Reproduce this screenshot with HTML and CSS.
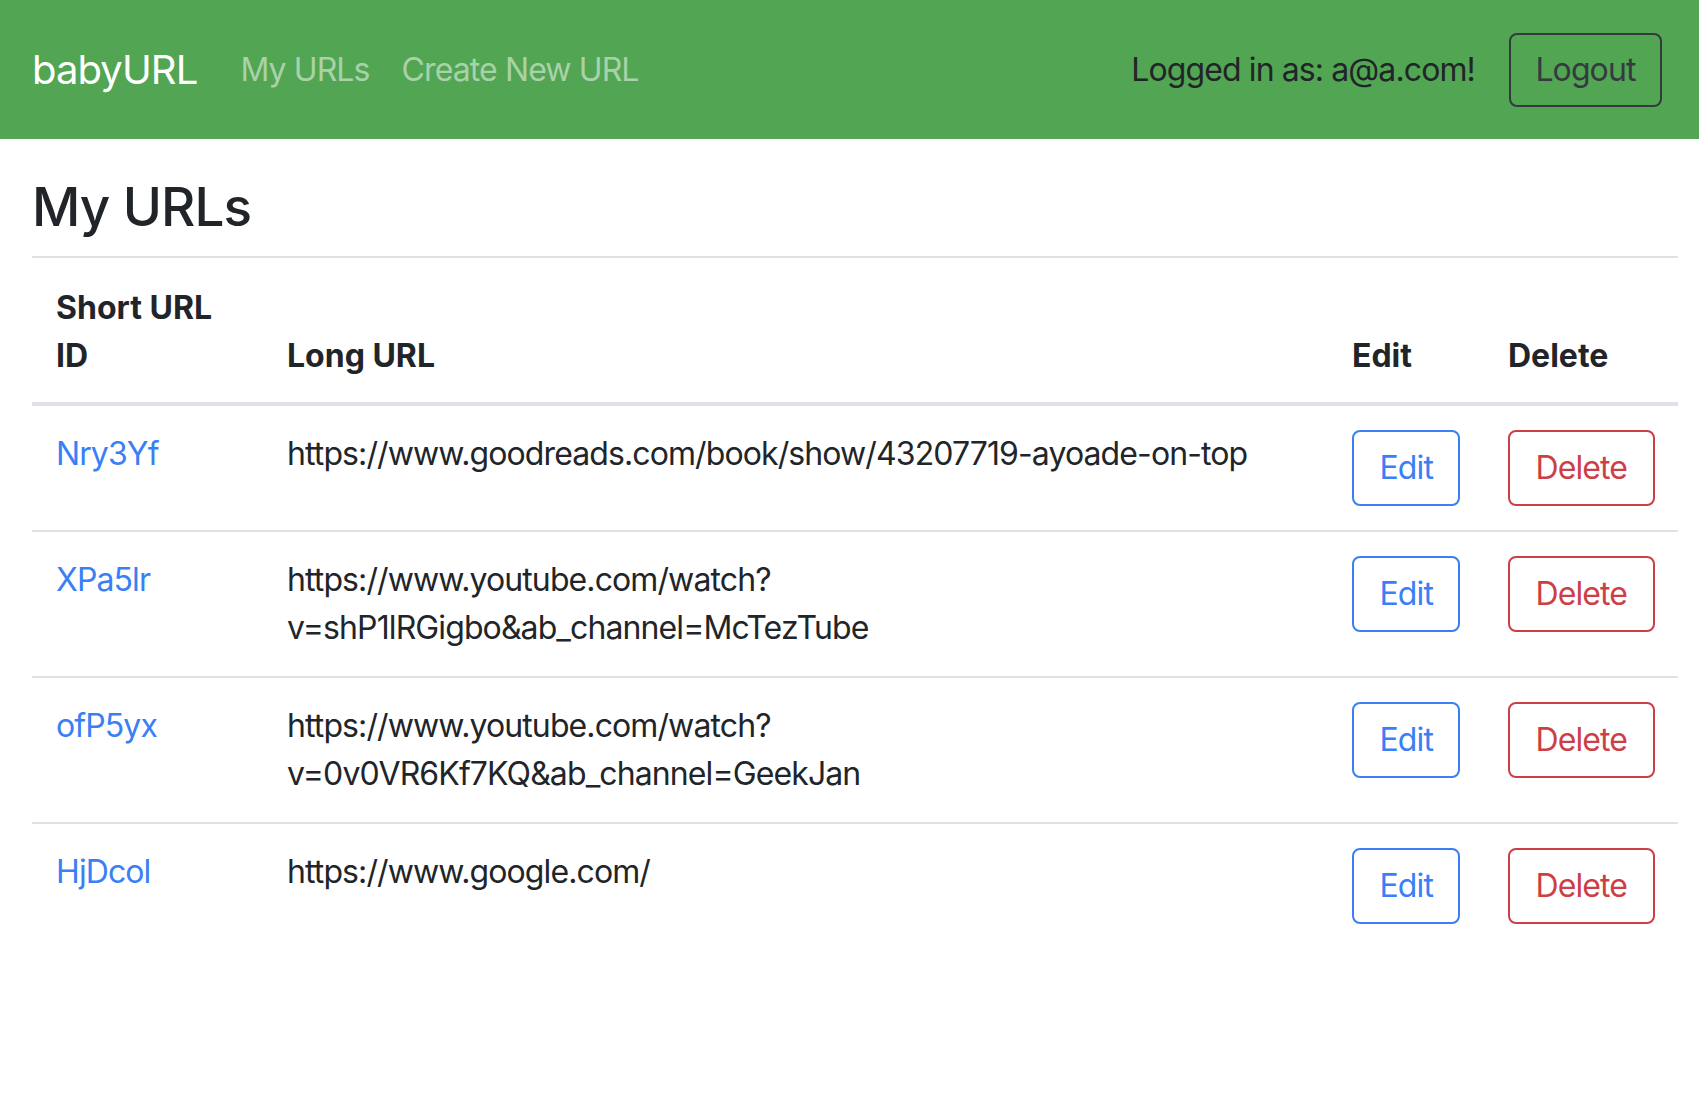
FILE: index.html
```html
<!DOCTYPE html>
<html lang="en">
<head>
<meta charset="utf-8">
<title>babyURL - My URLs</title>
<link rel="stylesheet" href="styles.css">
</head>
<body>
<nav class="navbar">
  <a class="brand" href="#">babyURL</a>
  <div class="nav-links">
    <a class="nav-link" href="#">My URLs</a>
    <a class="nav-link" href="#">Create New URL</a>
  </div>
  <div class="nav-right">
    <span class="nav-text">Logged in as: a@a.com!</span>
    <button class="btn btn-dark">Logout</button>
  </div>
</nav>
<main class="main">
  <h1 class="title">My URLs</h1>
  <table class="table">
    <colgroup>
      <col class="c1"><col class="c2"><col class="c3"><col class="c4">
    </colgroup>
    <thead>
      <tr>
        <th>Short URL ID</th>
        <th>Long URL</th>
        <th>Edit</th>
        <th>Delete</th>
      </tr>
    </thead>
    <tbody>
      <tr>
        <td><a class="link" href="#">Nry3Yf</a></td>
        <td>https://www.goodreads.com/book/show/43207719-ayoade-on-top</td>
        <td><button class="btn btn-primary">Edit</button></td>
        <td><button class="btn btn-danger">Delete</button></td>
      </tr>
      <tr>
        <td><a class="link" href="#">XPa5lr</a></td>
        <td>https://www.youtube.com/watch?<br>v=shP1lRGigbo&amp;ab_channel=McTezTube</td>
        <td><button class="btn btn-primary">Edit</button></td>
        <td><button class="btn btn-danger">Delete</button></td>
      </tr>
      <tr>
        <td><a class="link" href="#">ofP5yx</a></td>
        <td>https://www.youtube.com/watch?<br>v=0v0VR6Kf7KQ&amp;ab_channel=GeekJan</td>
        <td><button class="btn btn-primary">Edit</button></td>
        <td><button class="btn btn-danger">Delete</button></td>
      </tr>
      <tr>
        <td><a class="link" href="#">HjDcol</a></td>
        <td>https://www.google.com/</td>
        <td><button class="btn btn-primary">Edit</button></td>
        <td><button class="btn btn-danger">Delete</button></td>
      </tr>
    </tbody>
  </table>
</main>
</body>
</html>
```
FILE: styles.css
```css
* { box-sizing: border-box; }
html, body { margin: 0; padding: 0; }
body {
  font-family: Inter, "Liberation Sans", sans-serif;
  font-size: 32px;
  line-height: 1.5;
  letter-spacing: -0.028em;
  color: #212529;
  background: #fff;
}
.navbar {
  display: flex;
  align-items: center;
  height: 139px;
  padding: 0 37px 0 32px;
  background: #52a552;
}
.brand {
  color: #fff;
  font-size: 40px;
  text-decoration: none;
  margin-right: 27px;
}
.nav-links { display: flex; flex: 1; }
.nav-link {
  color: #a9d2a9;
  text-decoration: none;
  padding: 0 16px;
}
.nav-right { display: flex; align-items: center; gap: 34px; }
.nav-text { color: #212529; }
.btn {
  font-family: inherit;
  font-size: 32px;
  line-height: 48px;
  letter-spacing: -0.028em;
  padding: 12px 25.5px;
  border: 2px solid;
  border-radius: 8px;
  background: transparent;
  cursor: pointer;
}
.btn-dark {
  color: #343a40;
  border-color: #343a40;
  padding: 11px 24.5px;
}
.btn-primary { color: #3a7ff5; border-color: #3a7ff5; }
.btn-danger { color: #cd3f46; border-color: #cd3f46; }
.main { padding: 37px 21px 0 32px; }
.title {
  margin: 0 0 16px;
  font-size: 53px;
  font-weight: 500;
  line-height: 1.2;
}
.table {
  width: 100%;
  border-collapse: collapse;
  table-layout: fixed;
}
.c1 { width: 231px; }
.c3 { width: 156px; }
.c4 { width: 194px; }
.table th, .table td {
  padding: 24px;
  text-align: left;
  vertical-align: top;
  border-top: 2px solid #dee2e6;
}
.table th {
  padding: 26px 24px 22px;
  font-weight: 700;
  letter-spacing: 0;
  vertical-align: bottom;
  border-bottom: 4px solid #dee2e6;
}
.link { color: #3a7ff5; text-decoration: none; }
```
